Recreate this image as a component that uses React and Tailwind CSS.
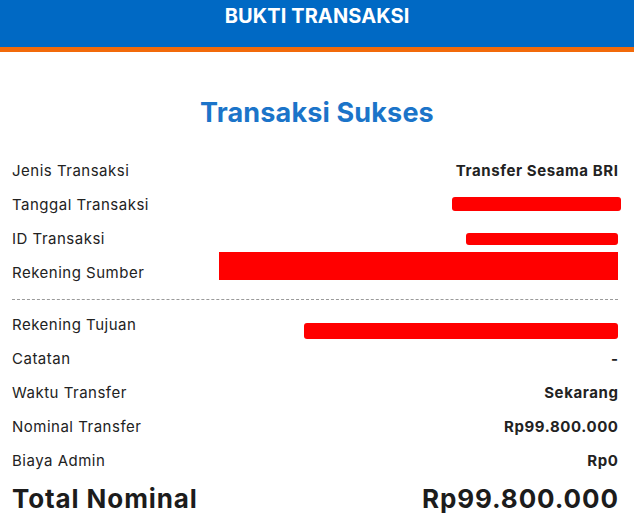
import React from 'react'

const rowsTop = [
  { label: 'Jenis Transaksi', value: 'Transfer Sesama BRI' },
  { label: 'Tanggal Transaksi', bar: 'w-[169px] h-[14px] rounded-[3px] mr-[-3px] mb-[3px]' },
  { label: 'ID Transaksi', bar: 'w-[152px] h-[12px] rounded-[3px] mb-[1px]' },
  { label: 'Rekening Sumber', bar: 'w-[399px] h-[28px] mb-[15px]' },
]

const rowsBottom = [
  { label: 'Rekening Tujuan', bar: 'w-[314px] h-[16px] rounded-[3px] mt-[12px]' },
  { label: 'Catatan', value: '-' },
  { label: 'Waktu Transfer', value: 'Sekarang' },
  { label: 'Nominal Transfer', value: 'Rp99.800.000' },
  { label: 'Biaya Admin', value: 'Rp0' },
]

function Row({ item }) {
  return (
    <div className="flex h-[34px] items-center justify-between">
      <p className="text-[15px] text-[#222] tracking-[0.5px]">{item.label}</p>
      {item.bar ? (
        <div className={'bg-[#ff0000] shrink-0 ' + item.bar}></div>
      ) : (
        <p className="text-[15px] font-bold text-[#222] tracking-[0.6px] mr-[-0.6px]">{item.value}</p>
      )}
    </div>
  )
}

export default function App() {
  return (
    <div className="w-[634px] h-[527px] overflow-hidden bg-white font-['Inter',sans-serif]">
      {/* header */}
      <div className="h-[52px] bg-[#0069c4] border-b-[5px] border-[#f26a0a] text-center">
        <h1 className="pt-[2px] text-[20px] leading-[28px] font-bold text-white tracking-[0.1px]">
          BUKTI TRANSAKSI
        </h1>
      </div>

      <h2 className="mt-[43px] text-center text-[27px] leading-[36px] font-bold text-[#1b74c9] tracking-[0.15px]">
        Transaksi Sukses
      </h2>

      <div className="mt-[23px] pl-3 pr-4">
        {rowsTop.map((item) => (
          <Row key={item.label} item={item} />
        ))}

        <div className="mt-[9px] mb-[8px] border-t border-dashed border-[#9a9a9a]"></div>

        {rowsBottom.map((item) => (
          <Row key={item.label} item={item} />
        ))}

        <div className="mt-[4px] flex h-[32px] items-center justify-between text-[26px] font-bold text-[#1c1c1c] tracking-[0.9px]">
          <p>Total Nominal</p>
          <p className="mr-[-0.9px]">Rp99.800.000</p>
        </div>
      </div>
    </div>
  )
}
